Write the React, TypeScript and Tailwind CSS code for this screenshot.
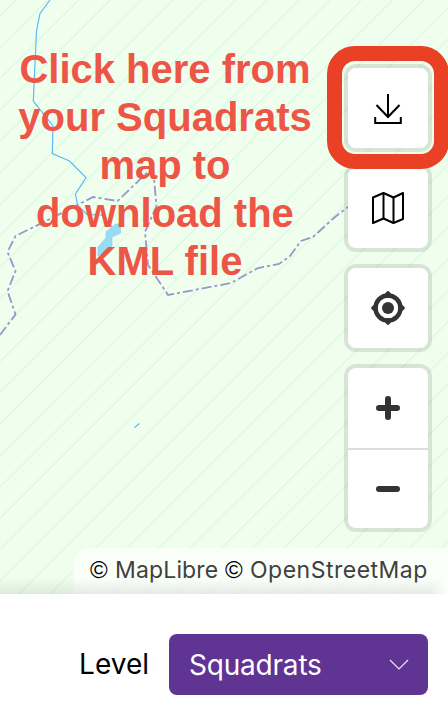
import React from "react";

const HATCH_GAP = 31.4;
const HATCH = Array.from({ length: 37 }, (_, i) => 16 + i * HATCH_GAP);

function MapCanvas() {
  return (
    <svg className="absolute inset-0 h-full w-full" viewBox="0 0 448 594" fill="none" aria-hidden="true">
      <g stroke="#dcf9e3" strokeWidth="1.4">
        {HATCH.map((d) => (
          <path key={d} d={`M0 ${d}L${d} 0`} />
        ))}
      </g>
      <path
        d="M50 0L40 13.5L36.5 31L33.3 101L53 126L52.3 153.5L69.5 161L86 177.5L75.5 194L77.5 205L87 214.5L102 215L112 227"
        stroke="#5cb9f3"
        strokeWidth="1.2"
      />
      <path d="M112 227L116 224H120.500V233L112 237V246L98 256V247L106 238V232Z" fill="#98dcf4" stroke="#7acdf0" strokeWidth="0.6" />
      <path d="M134.500 427.500L139.500 423.500" stroke="#5cb9f3" strokeWidth="1.3" />
      <g stroke="#9896cc" strokeWidth="1.8" strokeDasharray="10 3 3 3">
        <path d="M0 335L15.500 314.500L7.500 291L15.500 271L7.500 252L15.500 236L50 219L93 197L117.500 201L153 167" />
        <path d="M153 167L156.500 206L145 232L148 265L168 295L231 283L258 268L279 264L290 256L301 241L313 237L335 217L348 207" />
      </g>
    </svg>
  );
}

function MapButton({ label, children }: { label: string; children: React.ReactNode }) {
  return (
    <button aria-label={label} className="flex h-[88px] w-[88px] items-center justify-center rounded-[12px] border-4 border-black/10 bg-white bg-clip-padding">
      {children}
    </button>
  );
}

export default function App() {
  return (
    <div className="flex h-[716px] w-[448px] flex-col overflow-hidden bg-white font-['Inter',sans-serif]">
      <main className="relative flex h-[594px] shrink-0 flex-col overflow-hidden bg-[#f0ffed]">
        <MapCanvas />
        <div className="relative flex h-[548px] justify-between">
          <p className="mt-[45px] ml-[10px] w-[310px] text-center font-['Liberation_Sans',Arial,sans-serif] text-[40px] leading-[48px] font-bold text-[#ed5546]">
            Click here from
            <br />
            your Squadrats
            <br />
            map to
            <br />
            download the
            <br />
            KML file
          </p>
          <div className="mt-[64px] mr-4 flex flex-col gap-3">
            <div className="relative">
              <MapButton label="Download">
                <svg width="30" height="32" viewBox="0 0 30 32" fill="none" stroke="#000" strokeWidth="2">
                  <path d="M15 2V25M3.500 13L15 25L26.500 13M2.200 25V31H27.800V25" />
                </svg>
              </MapButton>
              <span className="pointer-events-none absolute -top-[18px] -left-[17px] z-10 h-[123px] w-[122px] rounded-[28px] border-[15px] border-[#ea4026]" />
            </div>
            <MapButton label="Map style">
              <svg width="34" height="34" viewBox="0 0 34 34" fill="none" stroke="#000" strokeWidth="2" strokeLinejoin="round">
                <path d="M2 6.500L12.500 2L22.500 6.500L32 2V28L22.500 32L12.500 27.500L2 32Z" />
                <path d="M12.500 2V27.500M22.500 6.500V32" />
              </svg>
            </MapButton>
            <MapButton label="Find my location">
              <svg width="36" height="36" viewBox="0 0 36 36" fill="none" stroke="#333">
                <circle cx="18" cy="18" r="12.500" strokeWidth="4.400" />
                <circle cx="18" cy="18" r="6" fill="#333" stroke="none" />
                <path d="M18 3.500L16.500 5.500H19.500ZM18 32.500L16.500 30.500H19.500ZM3.500 18L5.500 16.500V19.500ZM32.500 18L30.500 16.500V19.500Z" fill="#333" strokeWidth="4.500" strokeLinejoin="round" />
              </svg>
            </MapButton>
            <div className="flex h-[168px] w-[88px] flex-col overflow-hidden rounded-[12px] border-4 border-black/10 bg-white bg-clip-padding">
              <button aria-label="Zoom in" className="flex h-[82px] items-center justify-center border-b-2 border-[#ddd]">
                <svg width="24" height="24" viewBox="0 0 24 24" stroke="#333" strokeWidth="6" strokeLinecap="round">
                  <path d="M3 12H21M12 3V21" />
                </svg>
              </button>
              <button aria-label="Zoom out" className="flex h-[78px] items-center justify-center">
                <svg width="24" height="24" viewBox="0 0 24 24" stroke="#333" strokeWidth="6" strokeLinecap="round">
                  <path d="M3 12H21" />
                </svg>
              </button>
            </div>
          </div>
        </div>
        <div className="relative ml-[74px] flex h-[46px] items-center rounded-tl-[16px] bg-white/70 pb-[2px] pl-4 text-[23px] whitespace-nowrap text-[#404040]">
          <span className="w-[25px] font-['Liberation_Sans',sans-serif] text-[24px] text-black">©</span>
          <span className="w-[110px] tracking-[0.15px]">MapLibre</span>
          <span className="w-[25px] font-['Liberation_Sans',sans-serif] text-[24px] text-black">©</span>
          <span className="tracking-[0.5px]">OpenStreetMap</span>
        </div>
        <div className="absolute inset-x-0 bottom-0 h-4 bg-linear-to-t from-black/8 to-transparent [mask-image:linear-gradient(to_left,transparent,black_20px)]" />
      </main>
      <footer className="flex h-[122px] items-start justify-end gap-5 pt-10 pr-5">
        <span className="text-[28px] leading-[61px]">Level</span>
        <button className="flex h-[61px] w-[259px] items-center justify-between rounded-[8px] bg-[#603493] pr-[19px] pl-5 text-[28px] text-white">
          <span className="tracking-[-0.2px]">Squadrats</span>
          <svg width="20" height="12" viewBox="0 0 20 12" fill="none" stroke="#eee6f5" strokeWidth="1.200">
            <path d="M1 1L10 10L19 1" />
          </svg>
        </button>
      </footer>
    </div>
  );
}
